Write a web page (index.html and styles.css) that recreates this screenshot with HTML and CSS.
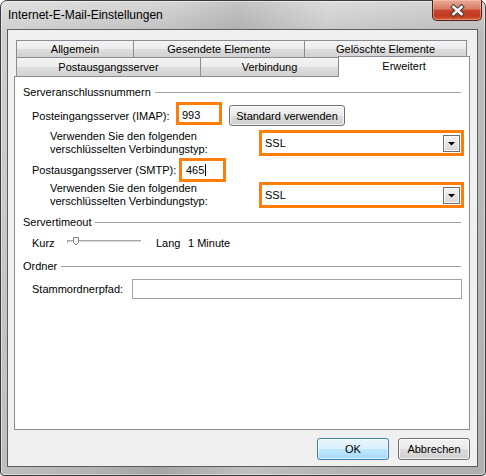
FILE: index.html
```html
<!DOCTYPE html>
<html lang="de">
<head>
    <meta charset="UTF-8">
    <title>Internet-E-Mail-Einstellungen</title>
    <link rel="stylesheet" href="styles.css">
</head>
<body>

    <div class="window">
        <div class="titlebar">
            <span class="title">Internet-E-Mail-Einstellungen</span>
            <div class="close-btn">
                <svg width="48" height="20" viewBox="0 0 48 20">
                    <path d="M20.5 7 L28.5 14 M28.5 7 L20.5 14" stroke="#3f3f3f" stroke-width="4.5" stroke-linecap="square" fill="none"/>
                    <path d="M20.5 7 L28.5 14 M28.5 7 L20.5 14" stroke="#fff" stroke-width="2.5" stroke-linecap="square" fill="none"/>
                </svg>
            </div>
        </div>

        <div class="client">
            <div class="tab-row back">
                <div class="tab tab-allgemein">Allgemein</div>
                <div class="tab tab-gesendet">Gesendete Elemente</div>
                <div class="tab tab-geloescht">Gelöschte Elemente</div>
            </div>
            <div class="tab-row front">
                <div class="tab tab-ausgang">Postausgangsserver</div>
                <div class="tab tab-verbindung">Verbindung</div>
                <div class="tab tab-erweitert active">Erweitert</div>
            </div>

            <div class="panel">
                <div class="legend">Serveranschlussnummern</div>

                <div class="row row-imap">
                    <span class="label label-imap">Posteingangsserver (IMAP):</span>
                    <div class="mark port port-imap">993</div>
                    <button class="btn std-btn">Standard verwenden</button>
                </div>

                <div class="row row-enc row-enc-1">
                    <span class="enc-text">Verwenden Sie den folgenden<br>verschlüsselten Verbindungstyp:</span>
                    <div class="mark enc-select">
                        <span>SSL</span>
                        <div class="drop">
                            <svg width="15" height="15" viewBox="0 0 15 15"><path d="M4 6 H11 L7.5 9.5 Z" fill="#000"/></svg>
                        </div>
                    </div>
                </div>

                <div class="row row-smtp">
                    <span class="label label-smtp">Postausgangsserver (SMTP):</span>
                    <div class="mark port port-smtp">465<span class="caret"></span></div>
                </div>

                <div class="row row-enc">
                    <span class="enc-text">Verwenden Sie den folgenden<br>verschlüsselten Verbindungstyp:</span>
                    <div class="mark enc-select">
                        <span>SSL</span>
                        <div class="drop">
                            <svg width="15" height="15" viewBox="0 0 15 15"><path d="M4 6 H11 L7.5 9.5 Z" fill="#000"/></svg>
                        </div>
                    </div>
                </div>

                <div class="legend legend-timeout">Servertimeout</div>

                <div class="row row-slider">
                    <span class="kurz">Kurz</span>
                    <svg class="slider" width="76" height="13" viewBox="0 0 76 13">
                        <path d="M1 3.5 H75" stroke="#a3a3a3"/>
                        <path d="M1 4.5 H75" stroke="#e2e2e2"/>
                        <path d="M1 5.5 H75" stroke="#f7f7f7"/>
                        <path d="M1.5 3 V6" stroke="#a3a3a3"/>
                        <path d="M7.5 0.5 H12.5 V5.5 L10 8 L7.5 5.5 Z" fill="#f4f4f4" stroke="#808080"/>
                    </svg>
                    <span class="lang">Lang</span>
                    <span>1 Minute</span>
                </div>

                <div class="legend legend-folder">Ordner</div>

                <div class="row row-path">
                    <span class="label label-path">Stammordnerpfad:</span>
                    <div class="path-input"></div>
                </div>
            </div>

            <div class="dialog-buttons">
                <button class="btn btn-default">OK</button>
                <button class="btn">Abbrechen</button>
            </div>
        </div>
    </div>

</body>
</html>
```

FILE: styles.css
```css
* {
    margin: 0;
    padding: 0;
    box-sizing: border-box;
}
body {
    width: 486px;
    height: 476px;
    overflow: hidden;
    background: #fff;
    font-family: "Liberation Sans", Arial, sans-serif;
    font-size: 11px;
    color: #000;
}

/* window frame */
.window {
    width: 486px;
    height: 476px;
    display: flex;
    flex-direction: column;
    padding: 0 7px 8px 6px;
    border: 1px solid #3b3b3b;
    border-radius: 7px 7px 4px 4px;
    background:
        linear-gradient(100deg, rgba(255,255,255,0.3) 0%, rgba(255,255,255,0.05) 30%, rgba(0,0,0,0.07) 42%, rgba(255,255,255,0.2) 58%, rgba(255,255,255,0) 80%),
        linear-gradient(#d3d3d3, #bdbdbd 30px, #b0b0b0);
    box-shadow: inset 0 0 0 1px rgba(255,255,255,0.45);
}
.titlebar {
    height: 28px;
    flex-shrink: 0;
    display: flex;
}
.title {
    font-size: 12px;
    line-height: 15px;
    padding: 7px 0 0 1px;
}
.close-btn {
    width: 50px;
    height: 21px;
    margin: -1px -4px 0 auto;
    border: 1px solid #4d2118;
    border-top: none;
    border-radius: 0 0 5px 5px;
    background: linear-gradient(#e9ab97, #d97a62 45%, #c4442b 52%, #c23a1e 80%, #d4603d);
    box-shadow: inset 0 0 0 1px rgba(255,210,195,0.45);
}
.close-btn svg {
    display: block;
}

/* client area */
.client {
    height: 438px;
    flex-shrink: 0;
    display: flex;
    flex-direction: column;
    padding: 10px 7px 0 6px;
    border: 1px solid #5d5d5d;
    background: #f0f0f0;
}

/* tabs */
.tab-row {
    display: flex;
    align-items: flex-start;
    padding-left: 2px;
}
.tab {
    flex-shrink: 0;
    border: 1px solid #898c95;
    border-bottom: none;
    background: linear-gradient(#f4f4f4, #ececec 50%, #dedede 51%, #d2d2d2);
    text-align: center;
}
.tab + .tab {
    margin-left: -1px;
}
.back .tab {
    height: 17px;
    line-height: 15px;
    padding-top: 1px;
}
.front {
    height: 19px;
}
.front .tab {
    height: 19px;
    line-height: 17px;
    padding-top: 1px;
}
.front .tab.active {
    position: relative;
    z-index: 1;
    height: 21px;
    margin-top: -1px;
    padding-top: 0;
    line-height: 19px;
    background: #fff;
}
.tab-allgemein { width: 118px; }
.tab-gesendet { width: 172px; }
.tab-geloescht { width: 163px; }
.tab-ausgang { width: 185px; }
.tab-verbindung { width: 139px; }
.tab-erweitert { width: 132px; }

.panel {
    height: 354px;
    flex-shrink: 0;
    padding: 9px 8px 0;
    border: 1px solid #898c95;
    background: #fff;
}

/* group headings */
.legend {
    display: flex;
    align-items: center;
    line-height: 13px;
}
.legend::after {
    content: "";
    flex: 1;
    height: 0;
    margin-left: 4px;
    border-top: 1px solid #a0a0a0;
}
.legend-timeout { margin-top: 8px; }
.legend-folder { margin-top: 10px; }

.row {
    display: flex;
    align-items: flex-start;
    padding-left: 9px;
}
.label {
    flex-shrink: 0;
    line-height: 13px;
}

/* highlighted fields */
.mark {
    flex-shrink: 0;
    border: 3px solid #ff7d0a;
    background: #fff;
}
.port {
    line-height: 17px;
}
.row-imap { margin-top: 3px; }
.label-imap {
    width: 144px;
    margin-top: 8px;
}
.port-imap {
    width: 46px;
    height: 23px;
    padding: 2px 0 0 3px;
}
.row-smtp { margin-top: 2px; }
.label-smtp {
    width: 147px;
    margin-top: 6px;
}
.port-smtp {
    width: 47px;
    height: 24px;
    padding: 1px 0 0 4px;
}
.caret {
    display: inline-block;
    width: 1px;
    height: 12px;
    margin-left: 1px;
    vertical-align: -2px;
    background: #000;
}

.row-enc {
    align-items: center;
    padding-left: 27px;
}
.row-enc-1 { margin-top: 4px; }
.enc-text {
    width: 209px;
    flex-shrink: 0;
    line-height: 13px;
}
.enc-select {
    width: 205px;
    height: 26px;
    display: flex;
    align-items: center;
    justify-content: space-between;
    padding-left: 3px;
}
.drop {
    width: 17px;
    height: 17px;
    margin-right: 1px;
    border: 1px solid #6f6f6f;
    background: linear-gradient(#f5f5f5, #e6e6e6 50%, #d6d6d6);
    box-shadow: inset 0 0 0 1px rgba(255,255,255,0.8);
}
.drop svg {
    display: block;
}

/* timeout slider */
.row-slider {
    margin-top: 8px;
    line-height: 13px;
}
.kurz { width: 34px; }
.slider {
    display: block;
    flex-shrink: 0;
}
.lang {
    width: 32px;
    margin-left: 14px;
}

.row-path {
    align-items: center;
    margin-top: 6px;
}
.label-path { width: 100px; }
.path-input {
    width: 330px;
    height: 20px;
    flex-shrink: 0;
    border: 1px solid #a3a3a3;
    background: #fff;
}

/* buttons */
.btn {
    font: inherit;
    color: #000;
    text-align: center;
    border: 1px solid #707070;
    border-radius: 3px;
    background: linear-gradient(#f2f2f2, #ebebeb 50%, #dddddd 51%, #cfcfcf);
    box-shadow: inset 0 0 0 1px rgba(255,255,255,0.7);
}
.std-btn {
    width: 116px;
    height: 21px;
    margin: 3px 0 0 7px;
    flex-shrink: 0;
}
.dialog-buttons {
    display: flex;
    justify-content: flex-end;
    gap: 9px;
    margin-top: 8px;
}
.dialog-buttons .btn {
    width: 72px;
    height: 22px;
}
.btn-default {
    border-color: #3c7fb1;
    background: linear-gradient(#eaf6fd, #d9f0fc 50%, #bee6fd 51%, #a7d9f5);
    box-shadow: inset 0 0 0 1px rgba(255,255,255,0.6);
}
```
